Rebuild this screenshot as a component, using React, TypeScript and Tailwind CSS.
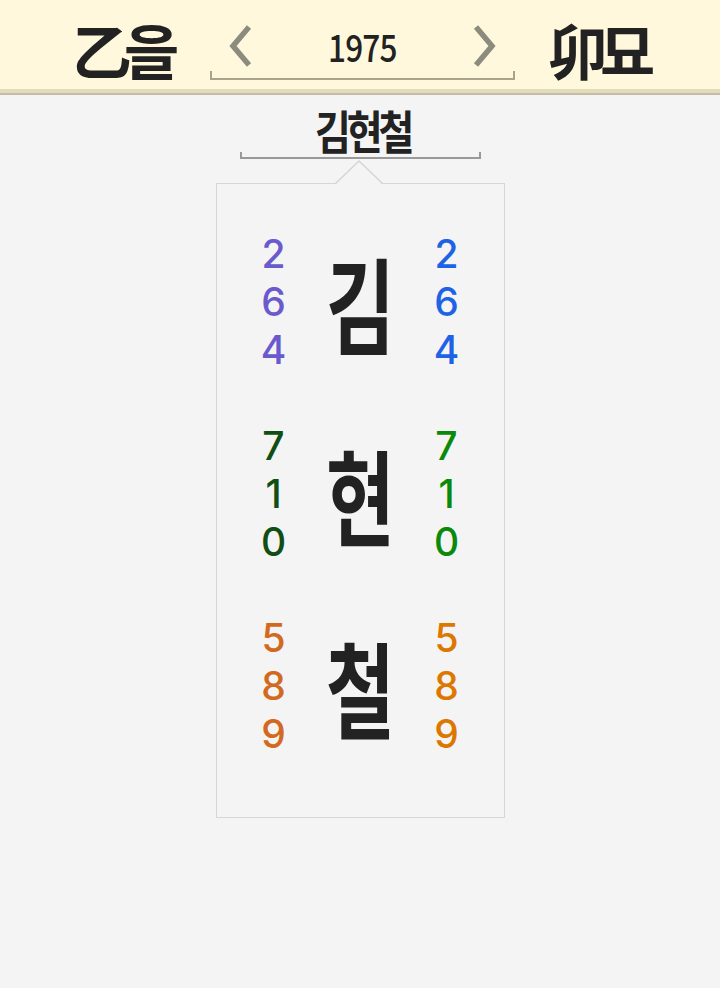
import * as React from 'react';

const FONT = { fontFamily: '"Noto Sans CJK KR", "Noto Sans", sans-serif' };

interface Group {
    char: string;
    digits: string[];
    left: string;
    right: string;
}

const groups: Group[] = [
    { char: '김', digits: ['2', '6', '4'], left: 'text-[#6a5acd]', right: 'text-[#1e63e6]' },
    { char: '현', digits: ['7', '1', '0'], left: 'text-[#0f4f14]', right: 'text-[#0a8a0a]' },
    { char: '철', digits: ['5', '8', '9'], left: 'text-[#d2691e]', right: 'text-[#dc7800]' },
];

const Chevron = ({ dir }: { dir: 'left' | 'right' }) => (
    <svg width="24" height="42" viewBox="0 0 24 42" className={dir === 'right' ? 'scale-x-[-1]' : ''}>
        <polyline points="21,2 5,21 21,40" fill="none" stroke="#8b8b7e" strokeWidth="5.5" />
    </svg>
);

const DigitColumn = ({ digits, color }: { digits: string[]; color: string }) => (
    <div className={`flex flex-col items-center font-['Inter',sans-serif] font-medium text-[39px] leading-[48px] ${color}`}>
        {digits.map((d, i) => (
            <span key={i}>{d}</span>
        ))}
    </div>
);

export default function App() {
    return (
        <div className="min-h-screen bg-[#f4f4f4] text-[#222]" style={FONT}>
            {/* year header */}
            <header className="h-[89px] bg-[#fff8dc] flex justify-center gap-[33px] pl-[5px]">
                <div className="w-[105px] pt-[19px] text-[60px] leading-[60px] font-bold tracking-[-8px] whitespace-nowrap">
                    乙을
                </div>
                <div className="w-[305px] pt-[25px] flex flex-col">
                    <div className="h-[42px] flex items-center justify-between px-[18px]">
                        <Chevron dir="left" />
                        <span className="text-[38px] leading-[42px] font-medium scale-x-[0.83] tracking-[-1px]">1975</span>
                        <Chevron dir="right" />
                    </div>
                    <svg width="305" height="12" viewBox="0 0 305 12" className="mt-[2px]">
                        <polyline points="1,2 1,10 304,10 304,2" fill="none" stroke="#a8a48c" strokeWidth="2" />
                    </svg>
                </div>
                <div className="w-[105px] pt-[19px] text-[60px] leading-[60px] font-bold tracking-[-8px] whitespace-nowrap">
                    卯묘
                </div>
            </header>
            <div className="h-[4px] bg-[#e3dcbc]" />
            <div className="h-[2px] bg-[#c4bca4]" />

            <main className="flex flex-col items-center">
                <div className="mt-[11px] text-[46px] leading-[46px] font-bold tracking-[-5px] scale-x-[0.85] pl-[5px]">
                    김현철
                </div>
                <svg width="241" height="8" viewBox="0 0 241 8">
                    <polyline points="1,0 1,6 240,6 240,0" fill="none" stroke="#999" strokeWidth="2" />
                </svg>

                <div className="relative mt-[23px] w-[289px] h-[635px] border border-[#d6d6d6] pt-[46px] px-[37px] flex flex-col gap-[48px]">
                    {/* pointer notch */}
                    <svg width="52" height="25" viewBox="0 0 52 25" className="absolute -top-[24px] left-[117px]">
                        <polygon points="2,24 25,1 48,24" fill="#f4f4f4" />
                        <polyline points="1,24 25,1 49,24" fill="none" stroke="#d6d6d6" strokeWidth="1.5" />
                    </svg>
                    {groups.map(g => (
                        <div key={g.char} className="h-[144px] grid grid-cols-[40px_1fr_40px] items-center">
                            <DigitColumn digits={g.digits} color={g.left} />
                            <div className="text-center text-[104px] leading-[104px] font-bold scale-x-[0.72]">
                                {g.char}
                            </div>
                            <DigitColumn digits={g.digits} color={g.right} />
                        </div>
                    ))}
                </div>
            </main>
        </div>
    );
}
